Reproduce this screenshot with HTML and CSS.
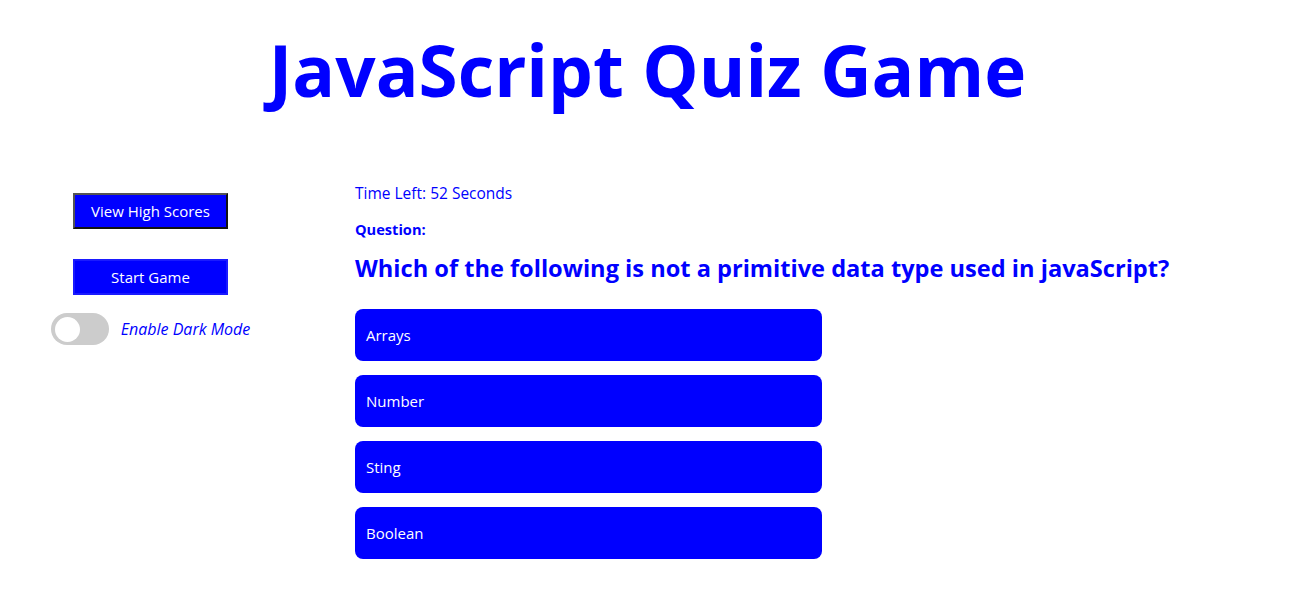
FILE: index.html
```html
<!DOCTYPE html>
<html lang="en">
<head>
<meta charset="utf-8">
<title>JavaScript Quiz Game</title>
<link rel="stylesheet" href="styles.css">
</head>
<body>
<header class="header">
  <h1 class="title">JavaScript Quiz Game</h1>
</header>
<main class="layout">
  <aside class="sidebar">
    <button class="side-btn side-btn-scores">View High Scores</button>
    <button class="side-btn side-btn-start">Start Game</button>
    <label class="dark-toggle">
      <span class="switch"><span class="knob"></span></span>
      <span class="dark-label">Enable Dark Mode</span>
    </label>
  </aside>
  <section class="quiz">
    <p class="timer">Time Left: 52 Seconds</p>
    <p class="question-label">Question:</p>
    <h2 class="question">Which of the following is not a primitive data type used in javaScript?</h2>
    <div class="answers">
      <button class="answer">Arrays</button>
      <button class="answer">Number</button>
      <button class="answer">Sting</button>
      <button class="answer">Boolean</button>
    </div>
  </section>
</main>
</body>
</html>
```
FILE: styles.css
```css
* { box-sizing: border-box; }
body {
  margin: 0;
  background: #fff;
  color: #0000ff;
  font-family: "Open Sans", "DejaVu Sans", sans-serif;
}
.header {
  display: flex;
  justify-content: center;
  padding-top: 22px;
}
.title {
  margin: 0;
  font-size: 71px;
  font-weight: 700;
  line-height: 96px;
  color: #0000ff;
}
.layout {
  display: flex;
  margin-top: 64px;
}
.sidebar {
  width: 301px;
  display: flex;
  flex-direction: column;
  align-items: center;
  padding-top: 11px;
}
.side-btn {
  width: 155px;
  height: 36px;
  background: #0000ff;
  color: #fff;
  font-family: inherit;
  font-size: 15px;
  padding: 0;
  cursor: pointer;
}
.side-btn-scores {
  border: 2px solid;
  border-color: #555 #111 #111 #555;
}
.side-btn-start {
  margin-top: 30px;
  border: 2px solid #1a1aff;
}
.dark-toggle {
  display: flex;
  align-items: center;
  gap: 12px;
  margin-top: 18px;
}
.switch {
  width: 58px;
  height: 32px;
  border-radius: 16px;
  background: #cccccc;
  display: flex;
  align-items: center;
  padding-left: 4px;
}
.knob {
  width: 25px;
  height: 25px;
  border-radius: 50%;
  background: #fff;
}
.dark-label {
  font-style: italic;
  font-size: 16px;
  color: #0000ff;
}
.quiz {
  margin-left: 54px;
}
.timer {
  margin: 0;
  font-size: 15.5px;
  line-height: 22px;
}
.question-label {
  margin: 15px 0 0;
  font-size: 14.6px;
  font-weight: 700;
  line-height: 20px;
}
.question {
  margin: 14px 0 0;
  font-size: 23.6px;
  font-weight: 700;
  line-height: 30px;
}
.answers {
  display: flex;
  flex-direction: column;
  gap: 14px;
  margin-top: 26px;
  width: 467px;
}
.answer {
  height: 52px;
  border: none;
  border-radius: 8px;
  background: #0000ff;
  color: #fff;
  font-family: inherit;
  font-size: 15px;
  text-align: left;
  padding: 0 11px;
  cursor: pointer;
}
```
